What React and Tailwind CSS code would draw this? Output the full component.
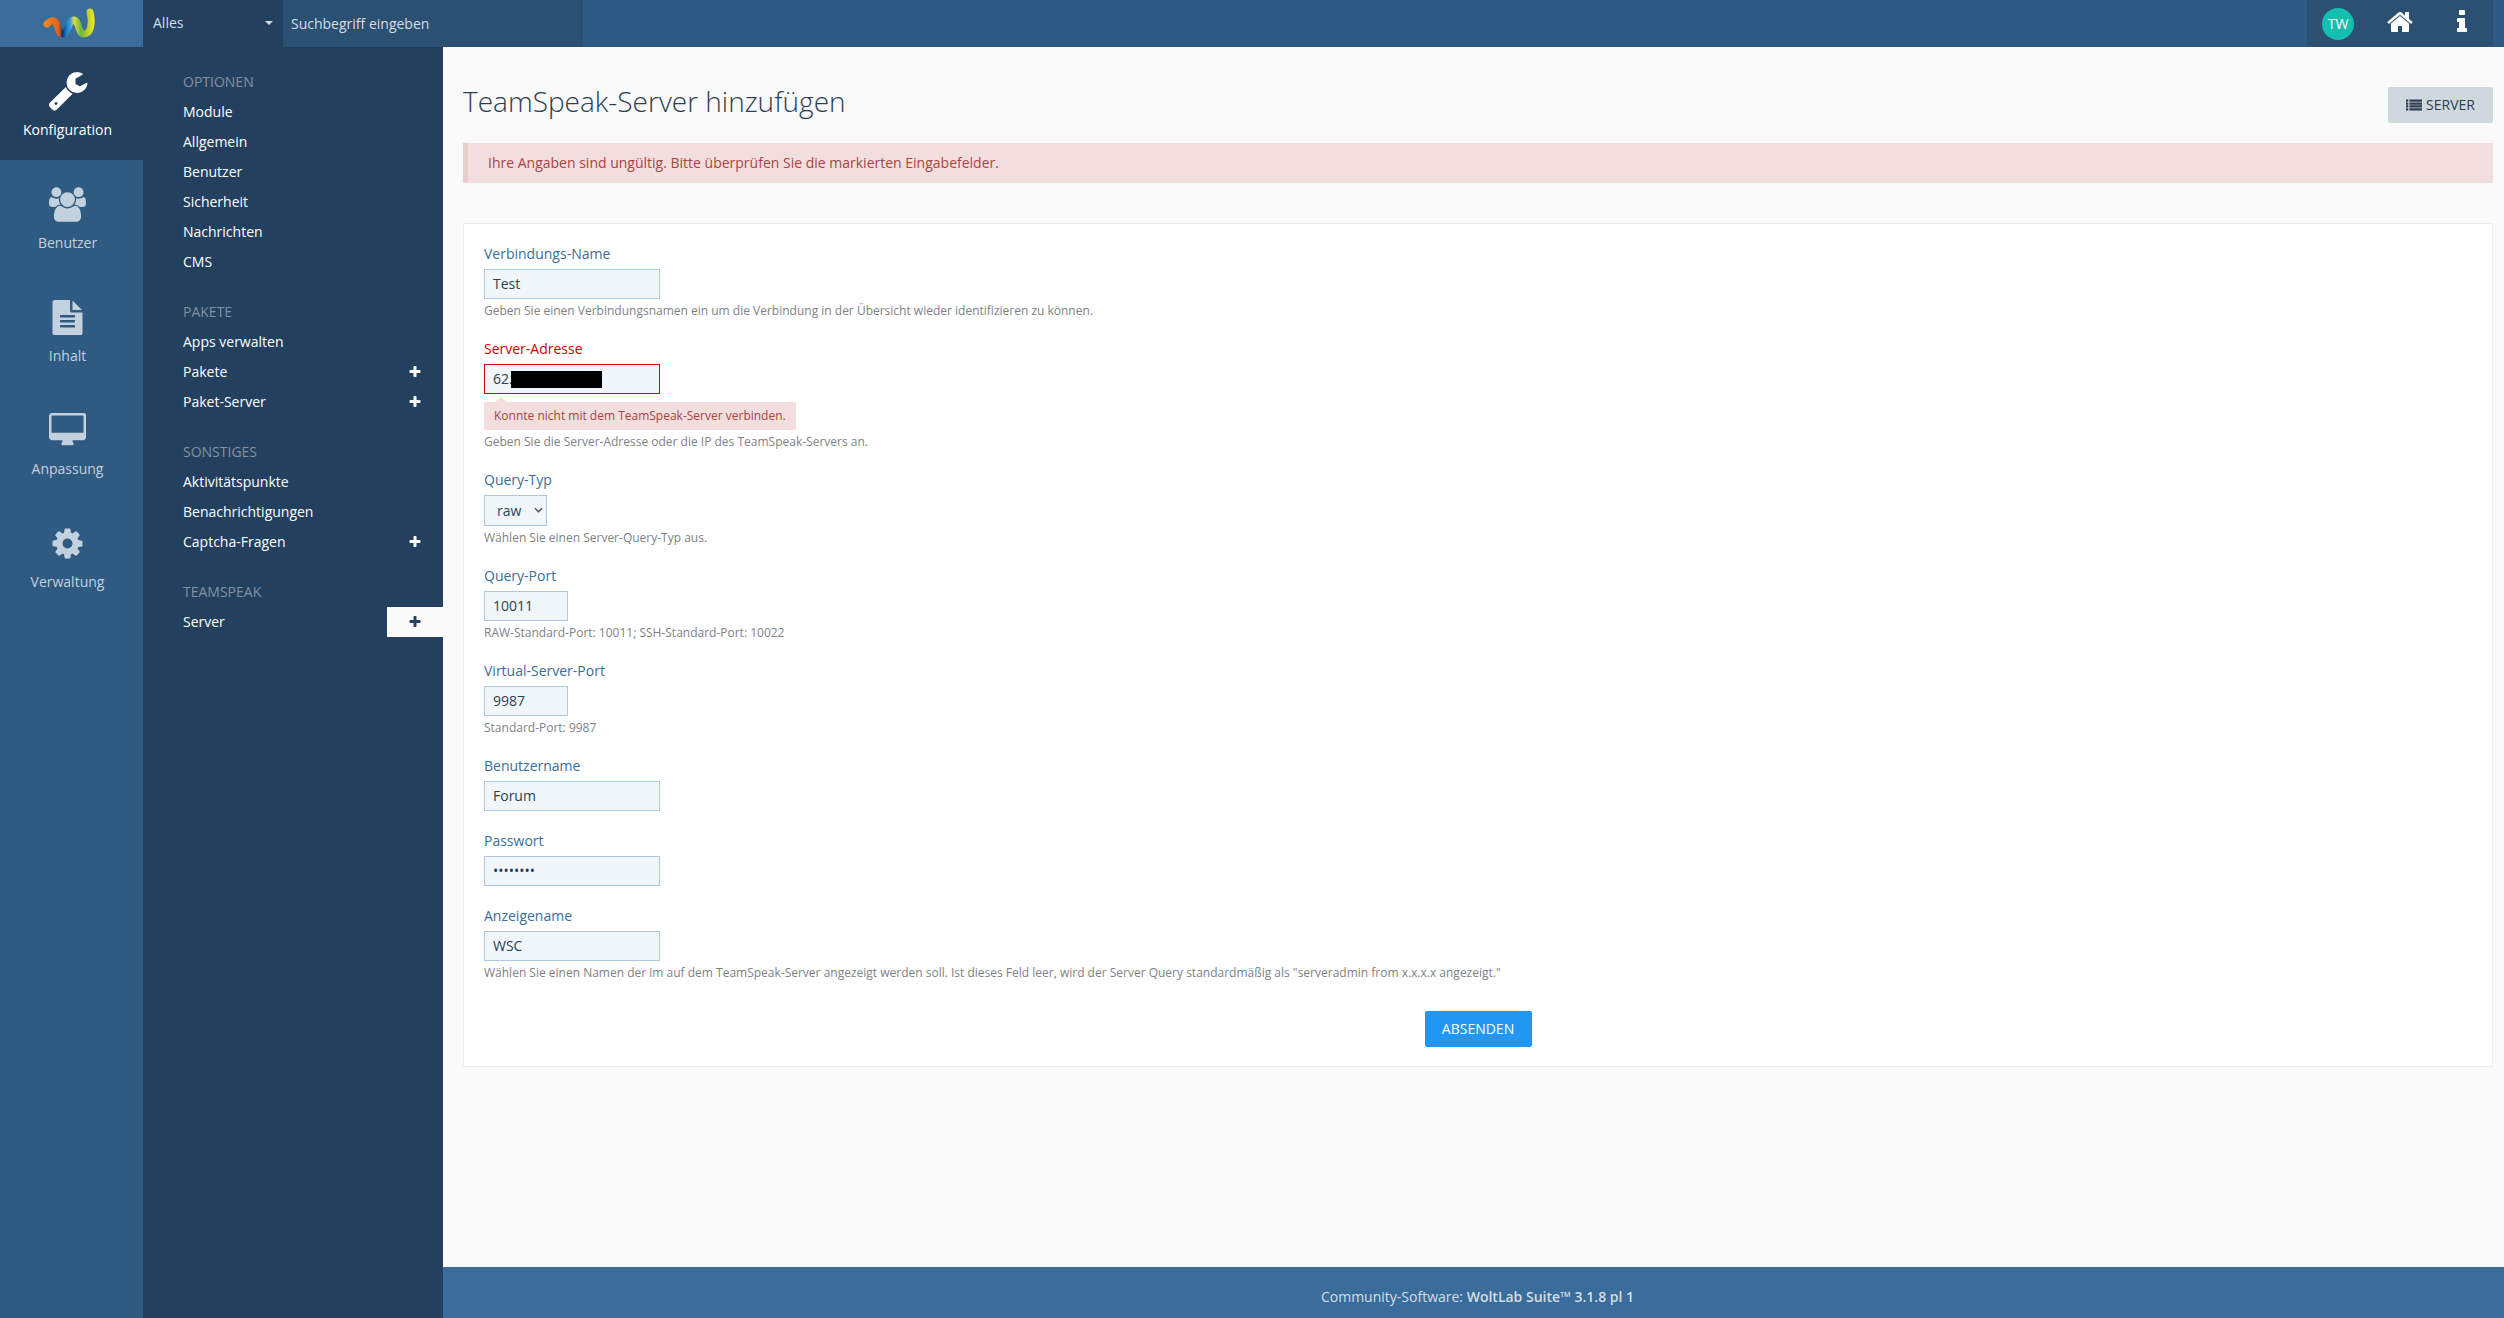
import React from 'react'

const FONT = { fontFamily: '"Open Sans", sans-serif' }

// FontAwesome 4 glyphs
const ICONS = {
  wrench: { box: '0 0 1792 1792', d: 'M448 1472q0-26-19-45t-45-19-45 19-19 45 19 45 45 19 45-19 19-45zm644-420l-682 682q-37 37-90 37-52 0-91-37l-106-108q-38-36-38-90 0-53 38-91l681-681q39 98 114.5 173.5t173.5 114.5zm634-435q0 39-23 106-47 134-164.5 217.5t-258.5 83.5q-185 0-316.5-131.5t-131.5-316.5 131.5-316.5 316.5-131.5q58 0 121.5 16.5t107.5 46.5q16 11 16 28t-16 28l-293 169v224l193 107q5-3 79-48.5t135.5-81 70.5-35.5q15 0 23.5 10t8.5 25z' },
  users: { box: '0 0 1920 1792', d: 'M593 896q-162 5-265 128h-134q-82 0-138-40.5t-56-118.5q0-353 124-353 6 0 43.5 21t97.5 42.5 119 21.5q67 0 133-23-5 37-5 66 0 139 81 256zm1071 637q0 120-73 189.5t-194 69.5h-874q-121 0-194-69.5t-73-189.5q0-53 3.5-103.5t14-109 26.5-108.5 43-97.5 62-81 85.5-53.5 111.5-20q10 0 43 21.5t73 48 107 48 135 21.5 135-21.5 107-48 73-48 43-21.5q61 0 111.5 20t85.5 53.5 62 81 43 97.5 26.5 108.5 14 109 3.5 103.5zm-1024-1277q0 106-75 181t-181 75-181-75-75-181 75-181 181-75 181 75 75 181zm704 384q0 159-112.5 271.5t-271.5 112.5-271.5-112.5-112.5-271.5 112.5-271.5 271.5-112.5 271.5 112.5 112.5 271.5zm576 225q0 78-56 118.5t-138 40.5h-134q-103-123-265-128 81-117 81-256 0-29-5-66 66 23 133 23 59 0 119-21.5t97.5-42.5 43.5-21q124 0 124 353zm-128-609q0 106-75 181t-181 75-181-75-75-181 75-181 181-75 181 75 75 181z' },
  file: { box: '0 0 1792 1792', d: 'M1596 476q14 14 28 36h-472v-472q22 14 36 28zm-476 164h544v1056q0 40-28 68t-68 28h-1344q-40 0-68-28t-28-68v-1600q0-40 28-68t68-28h800v544q0 40 28 68t68 28zm160 736v-64q0-14-9-23t-23-9h-704q-14 0-23 9t-9 23v64q0 14 9 23t23 9h704q14 0 23-9t9-23zm0-256v-64q0-14-9-23t-23-9h-704q-14 0-23 9t-9 23v64q0 14 9 23t23 9h704q14 0 23-9t9-23zm0-256v-64q0-14-9-23t-23-9h-704q-14 0-23 9t-9 23v64q0 14 9 23t23 9h704q14 0 23-9t9-23z' },
  desktop: { box: '0 -96 1920 1792', d: 'M1792 992v-832q0-13-9.5-22.5t-22.5-9.5h-1600q-13 0-22.5 9.5t-9.5 22.5v832q0 13 9.5 22.5t22.5 9.5h1600q13 0 22.5-9.5t9.5-22.5zm128-832v1088q0 66-47 113t-113 47h-544q0 37 16 77.5t32 71 16 43.5q0 26-19 45t-45 19h-512q-26 0-45-19t-19-45q0-14 16-44t32-70 16-78h-544q-66 0-113-47t-47-113v-1088q0-66 47-113t113-47h1632q66 0 113 47t47 113z' },
  cog: { box: '0 0 1792 1792', d: 'M1152 896q0-106-75-181t-181-75-181 75-75 181 75 181 181 75 181-75 75-181zm512-109v222q0 12-8 23t-20 13l-185 28q-19 54-39 91 35 50 107 138 10 12 10 25t-9 23q-27 37-99 108t-94 71q-12 0-26-9l-138-108q-44 23-91 38-16 136-29 186-7 28-36 28h-222q-14 0-24.5-8.5t-11.5-21.5l-28-184q-49-16-90-37l-141 107q-10 9-25 9-14 0-25-11-126-114-165-168-7-10-7-23 0-12 8-23 15-21 51-66.5t54-70.5q-27-50-41-99l-183-27q-13-2-21-12.5t-8-23.5v-222q0-12 8-23t19-13l186-28q14-46 39-92-40-57-107-138-10-12-10-24 0-10 9-23 26-36 98.5-107.5t94.5-71.5q13 0 26 10l138 107q44-23 91-38 16-136 29-186 7-28 36-28h222q14 0 24.5 8.5t11.5 21.5l28 184q49 16 90 37l142-107q9-9 24-9 13 0 25 10 129 119 165 170 7 8 7 22 0 12-8 23-15 21-51 66.5t-54 70.5q26 50 41 98l183 28q13 2 21 12.5t8 23.5z' },
  home: { box: '0 0 1792 1792', d: 'M1472 992v480q0 26-19 45t-45 19h-384v-384h-256v384h-384q-26 0-45-19t-19-45v-480q0-1 .5-3t.5-3l575-474 575 474q1 2 1 6zm223-69l-62 74q-8 9-21 11h-3q-13 0-21-7l-692-577-692 577q-12 8-24 7-13-2-21-11l-62-74q-8-10-7-23.5t11-21.5l719-599q32-26 76-26t76 26l244 204v-195q0-14 9-23t23-9h192q14 0 23 9t9 23v408l219 182q10 8 11 21.5t-7 23.5z' },
  info: { box: '0 0 1792 1792', d: 'M1216 1344v128q0 26-19 45t-45 19h-512q-26 0-45-19t-19-45v-128q0-26 19-45t45-19h64v-384h-64q-26 0-45-19t-19-45v-128q0-26 19-45t45-19h384q26 0 45 19t19 45v576h64q26 0 45 19t19 45zm-128-1152v192q0 26-19 45t-45 19h-256q-26 0-45-19t-19-45v-192q0-26 19-45t45-19h256q26 0 45 19t19 45z' },
  plus: { box: '0 0 1792 1792', d: 'M1600 736v192q0 40-28 68t-68 28h-416v416q0 40-28 68t-68 28h-192q-40 0-68-28t-28-68v-416h-416q-40 0-68-28t-28-68v-192q0-40 28-68t68-28h416v-416q0-40 28-68t68-28h192q40 0 68 28t28 68v416h416q40 0 68 28t28 68z' },
  list: { box: '0 0 1792 1792', d: 'M0 288h256v256h-256zM384 288h1408v256h-1408zM0 608h256v256h-256zM384 608h1408v256h-1408zM0 928h256v256h-256zM384 928h1408v256h-1408zM0 1248h256v256h-256zM384 1248h1408v256h-1408z' },
}

function Fa({ name, className }) {
  const icon = ICONS[name]
  return (
    <svg viewBox={icon.box} className={className} fill="currentColor">
      <path d={icon.d} />
    </svg>
  )
}

function Logo() {
  return (
    <svg viewBox="0 0 60 38" className="w-[60px] h-[38px]">
      <defs>
        <linearGradient id="wave" gradientUnits="userSpaceOnUse" x1="4" y1="0" x2="54" y2="0">
          <stop offset="0" stopColor="#f08a1c" />
          <stop offset="0.3" stopColor="#e2611c" />
          <stop offset="0.37" stopColor="#14315f" />
          <stop offset="0.45" stopColor="#1580d0" />
          <stop offset="0.53" stopColor="#3aa0d8" />
          <stop offset="0.6" stopColor="#e0d850" />
          <stop offset="0.74" stopColor="#6fb63a" />
          <stop offset="0.87" stopColor="#b4d02a" />
          <stop offset="1" stopColor="#f4e61e" />
        </linearGradient>
      </defs>
      <path
        d="M7 19 C12 14 15 15 17 20 C19 25 19 29 23 29 C28 29 28 15 34 15 C39 15 38 29 44 29 C50 29 53 20 50 7"
        fill="none"
        stroke="url(#wave)"
        strokeWidth="7"
        strokeLinecap="round"
      />
      <path d="M3 20 L8 15.5 L9 22 Z" fill="url(#wave)" />
    </svg>
  )
}

function SideItem({ icon, label, active, iconClass }) {
  return (
    <div className={`h-[113px] flex flex-col items-center pt-[23px] pr-2 ${active ? 'bg-[#24405f] text-white' : 'text-[#c3d0de]'}`}>
      <div className="h-[42px] flex items-center justify-center">
        <Fa name={icon} className={iconClass} />
      </div>
      <div className="text-[14px] leading-5 mt-2">{label}</div>
    </div>
  )
}

function NavGroup({ title, items }) {
  return (
    <div className="mb-5">
      <div className="h-[30px] flex items-center pl-10 text-[14px] uppercase text-[#82909f]">{title}</div>
      {items.map((item) => (
        <div key={item.label} className="h-[30px] flex items-center justify-between pl-10 text-[14px] text-white">
          <span>{item.label}</span>
          {item.plus && (
            <span className={`w-14 h-[30px] mt-[2px] flex items-center justify-center ${item.active ? 'bg-[#fafafa] text-[#24405f]' : ''}`}>
              <Fa name="plus" className="w-[14px] h-[14px]" />
            </span>
          )}
        </div>
      ))}
    </div>
  )
}

function Field({ label, value, width = 'w-[176px]', desc, error, type = 'text' }) {
  return (
    <div className="mb-5">
      <div className={`h-5 mb-[5px] text-[14px] leading-5 ${error ? 'text-[#cc0000]' : 'text-[#3a6d9c]'}`}>{label}</div>
      {type === 'select' ? (
        <div className={`${width} h-[31px] flex items-center justify-between bg-[#f1f6fb] border border-[#adc8e0] pl-[12px] pr-[3px] pb-px text-[14px] text-[#2c3e50]`}>
          <span>{value}</span>
          <svg viewBox="0 0 10 6" className="w-[9px] h-[6px]" fill="none" stroke="#4a5560" strokeWidth="1.5">
            <path d="M1 1l4 4 4-4" />
          </svg>
        </div>
      ) : (
        <div className={`${width} h-[30px] flex items-center bg-[#f1f6fb] border px-2 pb-[2px] text-[14px] text-[#2c3e50] ${error ? 'border-[#cc0000]' : 'border-[#adc8e0]'}`}>
          {type === 'redacted' ? (
            <>
              <span>62.</span>
              <span className="w-[91px] h-[17px] bg-black -ml-[2px] mt-[2px]" />
            </>
          ) : (
            <span>{value}</span>
          )}
        </div>
      )}
      {error && (
        <div className="relative mt-2 w-[312px] h-[28px] flex items-center bg-[#f2dede] pl-[10px] text-[12px] text-[#a94442]">
          <span className="absolute -top-[5px] left-[11px] w-0 h-0 border-l-[6px] border-r-[6px] border-b-[5px] border-l-transparent border-r-transparent border-b-[#f2dede]" />
          {error}
        </div>
      )}
      {desc && <div className="mt-1 h-4 text-[12px] leading-4 text-[#7d8287]">{desc}</div>}
    </div>
  )
}

export default function App() {
  return (
    <div className="min-h-screen flex flex-col bg-[#fafafa]" style={FONT}>
      {/* Header */}
      <header className="h-[47px] flex bg-[#2f5a83] pr-[11px]">
        <div className="w-[143px] bg-[#3a6d9c] flex items-center justify-center pr-1">
          <Logo />
        </div>
        <div className="w-[140px] bg-[#24405f] flex items-center justify-between px-[10px] pb-[2px] text-[14px] text-[#d5dde5]">
          <span>Alles</span>
          <span className="w-0 h-0 border-l-[4px] border-r-[4px] border-t-[4px] border-l-transparent border-r-transparent border-t-[#d5dde5]" />
        </div>
        <div className="w-[300px] bg-[#2c5072] flex items-center pl-2 pb-[1px] text-[14px] text-[#d5dde5]">Suchbegriff eingeben</div>
        <div className="ml-auto w-[186px] bg-[#2c5072] flex items-center text-white">
          <div className="ml-[15px] w-8 h-8 rounded-full bg-[#13bfae] flex items-center justify-center text-[14px]">TW</div>
          <Fa name="home" className="ml-8 -mt-1 w-7 h-7" />
          <Fa name="info" className="ml-[34px] -mt-1 w-7 h-7" />
        </div>
      </header>

      <div className="flex-1 flex">
        {/* Main menu */}
        <div className="w-[143px] bg-[#2f5a82]">
          <SideItem icon="wrench" label="Konfiguration" active iconClass="w-[42px] h-[42px] -mt-[2px]" />
          <SideItem icon="users" label="Benutzer" iconClass="w-[37px] h-[35px]" />
          <SideItem icon="file" label="Inhalt" iconClass="w-[35px] h-[35px]" />
          <SideItem icon="desktop" label="Anpassung" iconClass="w-[37px] h-[35px] -mt-1" />
          <SideItem icon="cog" label="Verwaltung" iconClass="w-[35px] h-[35px]" />
        </div>

        {/* Sub menu */}
        <div className="w-[300px] bg-[#24405f] pt-[19px]">
          <NavGroup
            title="Optionen"
            items={[{ label: 'Module' }, { label: 'Allgemein' }, { label: 'Benutzer' }, { label: 'Sicherheit' }, { label: 'Nachrichten' }, { label: 'CMS' }]}
          />
          <NavGroup
            title="Pakete"
            items={[{ label: 'Apps verwalten' }, { label: 'Pakete', plus: true }, { label: 'Paket-Server', plus: true }]}
          />
          <NavGroup
            title="Sonstiges"
            items={[{ label: 'Aktivitätspunkte' }, { label: 'Benachrichtigungen' }, { label: 'Captcha-Fragen', plus: true }]}
          />
          <NavGroup title="TeamSpeak" items={[{ label: 'Server', plus: true, active: true }]} />
        </div>

        {/* Content */}
        <div className="flex-1 flex flex-col min-w-0">
          <main className="flex-1 pl-5 pr-[11px] pt-[35px]">
            <div className="h-[41px] flex items-end justify-between">
              <h1 className="self-start -mt-px text-[28px] leading-10 font-light text-[#2c3e50]">TeamSpeak-Server hinzufügen</h1>
              <button className="w-[105px] h-9 flex items-center justify-center gap-1 rounded-[2px] bg-[#cfd8dc] pb-[2px] text-[14px] text-[#2c3e50]">
                <Fa name="list" className="w-[16px] h-[16px] mt-[2px]" />
                SERVER
              </button>
            </div>

            <div className="mt-5 h-10 flex items-center bg-[#f2dede] border-l-[5px] border-[#ebcccc] pl-5 pb-px text-[14px] text-[#a94442]">
              Ihre Angaben sind ungültig. Bitte überprüfen Sie die markierten Eingabefelder.
            </div>

            <form className="mt-10 h-[844px] bg-white border border-[#eceff1] pt-5 pl-5 pr-5">
              <Field label="Verbindungs-Name" value="Test" desc="Geben Sie einen Verbindungsnamen ein um die Verbindung in der Übersicht wieder identifizieren zu können." />
              <Field label="Server-Adresse" type="redacted" error="Konnte nicht mit dem TeamSpeak-Server verbinden." desc="Geben Sie die Server-Adresse oder die IP des TeamSpeak-Servers an." />
              <Field label="Query-Typ" type="select" value="raw" width="w-[63px]" desc="Wählen Sie einen Server-Query-Typ aus." />
              <Field label="Query-Port" value="10011" width="w-[84px]" desc="RAW-Standard-Port: 10011; SSH-Standard-Port: 10022" />
              <Field label="Virtual-Server-Port" value="9987" width="w-[84px]" desc="Standard-Port: 9987" />
              <Field label="Benutzername" value="Forum" />
              <Field label="Passwort" value="••••••••" />
              <Field label="Anzeigename" value="WSC" desc={'Wählen Sie einen Namen der im auf dem TeamSpeak-Server angezeigt werden soll. Ist dieses Feld leer, wird der Server Query standardmäßig als "serveradmin from x.x.x.x angezeigt."'} />
              <div className="mt-[30px] flex justify-center">
                <button className="w-[107px] h-9 rounded-[2px] bg-[#2196f3] pb-px text-[14px] text-white">ABSENDEN</button>
              </div>
            </form>
          </main>

          <footer className="h-[51px] flex items-center justify-center bg-[#3a6d9c] pt-2 pl-2 text-[14px] text-[#d5dde5]">
            <span>Community-Software: <span className="font-semibold">WoltLab Suite™ 3.1.8 pl 1</span></span>
          </footer>
        </div>
      </div>
    </div>
  )
}
